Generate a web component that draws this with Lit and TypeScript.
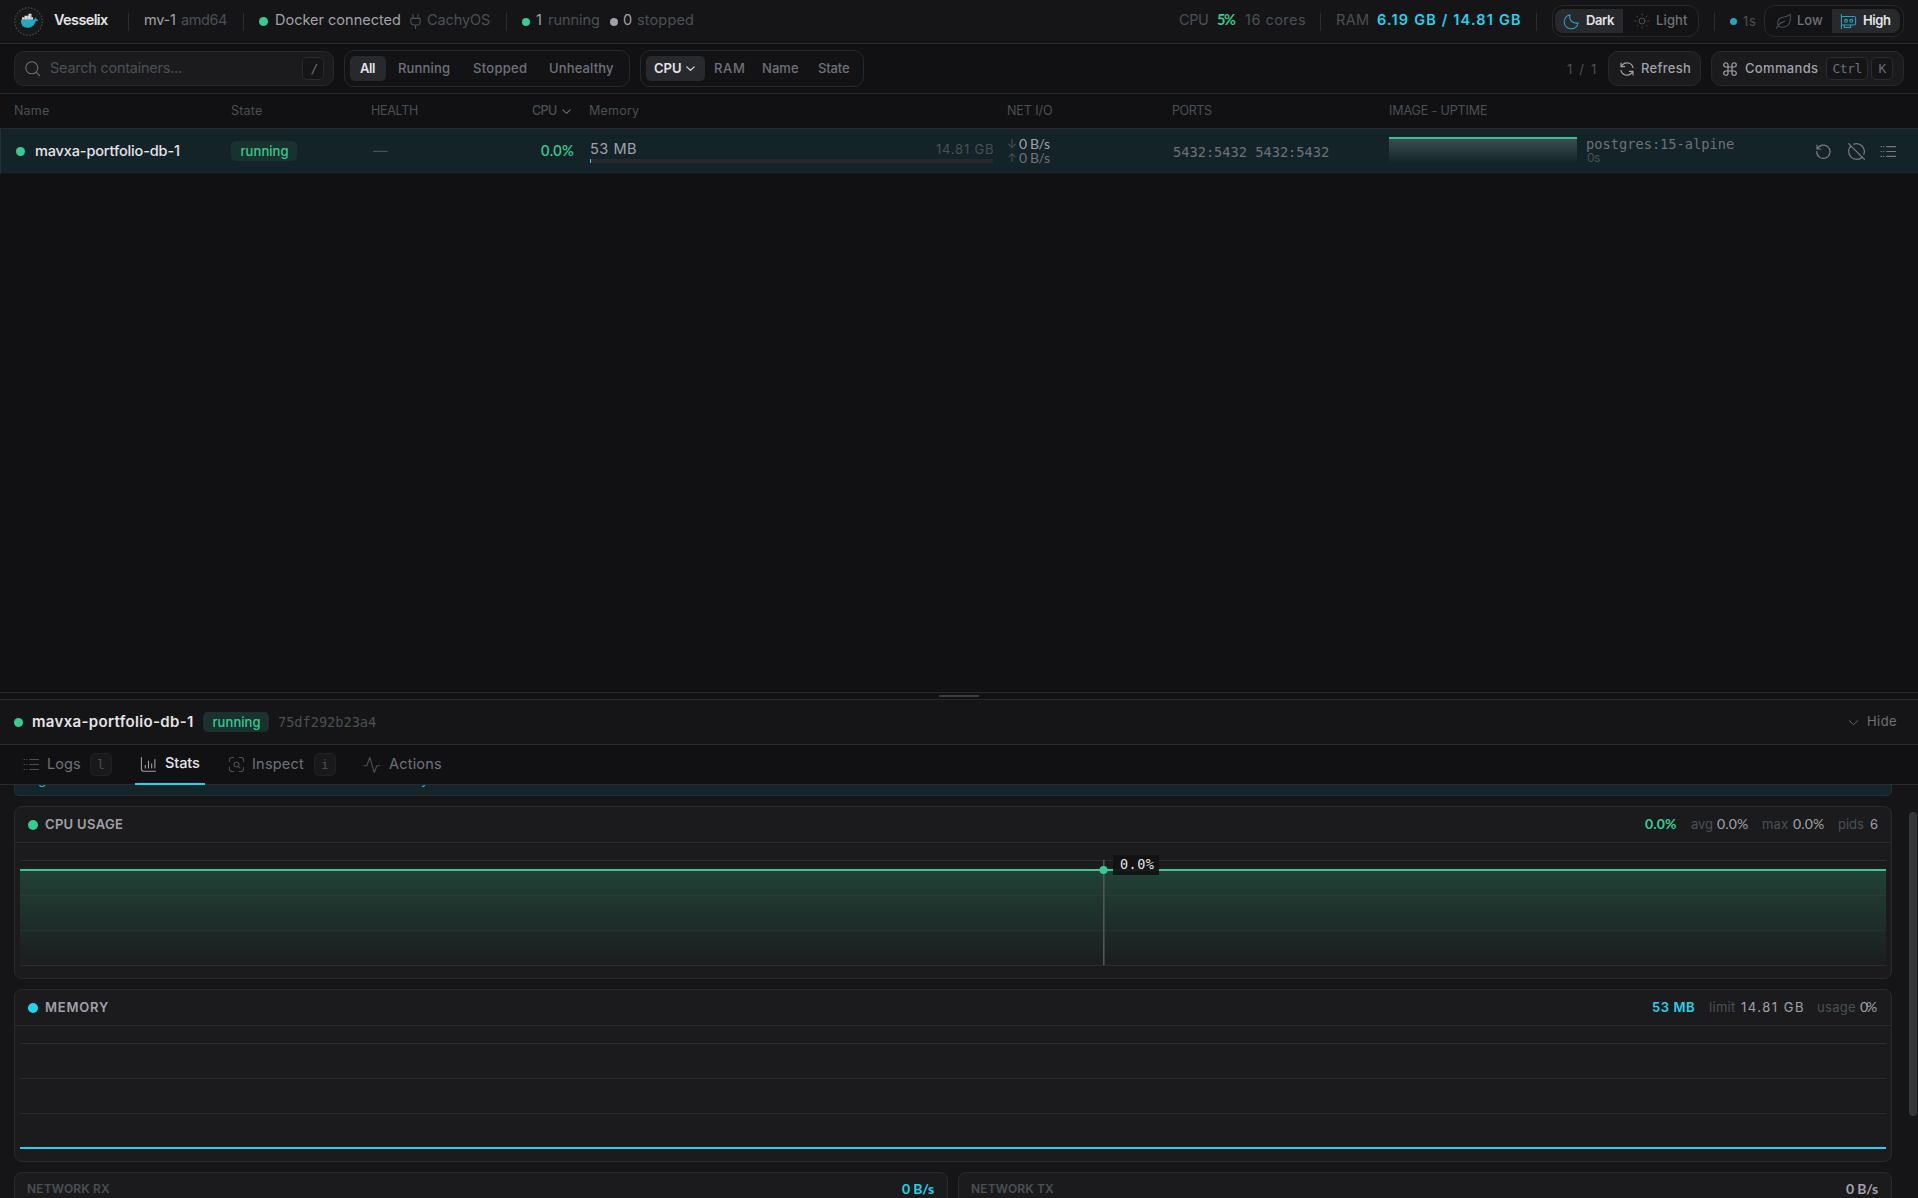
import { LitElement, html, css, svg, unsafeCSS } from "lit";
import { customElement, property } from "lit/decorators.js";

const probe = document.createElement("canvas").getContext("2d")!;

/** A one-line label whose tracking is adjusted so that its ink spans `w` pixels. */
@customElement("fit-text")
class FitText extends LitElement {
  @property({ type: Number }) w = 0;
  @property() t = "";
  static styles = css`
    :host { display: block; flex: none; white-space: pre; }
    span { display: block; }
  `;
  render() { return html`<span>${this.t}</span>`; }
  updated() {
    const span = this.renderRoot.querySelector("span") as HTMLElement;
    const cs = getComputedStyle(this);
    probe.font = `${cs.fontWeight} ${cs.fontSize} ${cs.fontFamily}`;
    const m = probe.measureText(this.t);
    const ink = m.actualBoundingBoxLeft + m.actualBoundingBoxRight;
    const n = this.t.length - 1;
    this.style.width = `${this.w}px`;
    span.style.marginLeft = `${m.actualBoundingBoxLeft}px`;
    if (n > 0) span.style.letterSpacing = `${(this.w - ink) / n}px`;
  }
}

const t = (text: string, w: number, cls = "") => html`<fit-text class=${cls} .t=${text} .w=${w}></fit-text>`;

const icon = (body: unknown, cls = "", size = 17, sw = 1.5) => html`
  <svg class="ic ${cls}" width=${size} height=${size} viewBox="0 0 24 24" fill="none" stroke="currentColor"
    stroke-width=${sw} stroke-linecap="round" stroke-linejoin="round">${body}</svg>`;

const I = {
  plug: svg`<path d="M8 1v6M16 1v6M4.500 7h15v5.500a5 5 0 0 1-5 5h-5a5 5 0 0 1-5-5zM12 17.500V23"/>`,
  moon: svg`<path d="M21.5 14.1A9.4 9.4 0 0 1 9.9 2.5A10 10 0 1 0 21.500 14.100zM9.900 2.500c-1.600 5.500 0 7.500 2.600 9.500s6 2.600 9 2.100"/>`,
  sun: svg`<circle cx="12" cy="12" r="4.5"/><path d="M12 1.500v1.500M12 21v1.500M1.500 12h1.500M21 12h1.500M4.600 4.600l1 1M18.400 18.400l1 1M4.600 19.400l1-1M18.400 5.600l1-1"/>`,
  leaf: svg`<path d="M4.500 18.500C2.500 12 5 7 10.500 6c4-.8 6.500-.5 11-4 1 8-.5 17-9.500 18-3 .3-5.500-.2-7.500-1.500zM2 22c1.500-5 5-8.500 11.500-10.500"/>`,
  gpu: svg`<path d="M2 2v20M2 5h17.500a2.500 2.500 0 0 1 2.500 2.500v7a2.500 2.500 0 0 1-2.500 2.500H2M6 17v3.500h9V17"/><circle cx="8.500" cy="11" r="2"/><circle cx="16" cy="11" r="2"/>`,
  search: svg`<circle cx="11" cy="11" r="8.500"/><path d="M17.500 17.500L22 22"/>`,
  chevron: svg`<path d="M4 8.500l8 7.500 8-7.500"/>`,
  refresh: svg`<path d="M21 10A9.200 9.200 0 0 0 5 6L3 8.500M3 3v5.500h5.500M3 14a9.200 9.200 0 0 0 16 4l2-2.500M21 21v-5.500h-5.500"/>`,
  command: svg`<path d="M9 9V5.800A3.200 3.200 0 1 0 5.800 9H9zm0 0h6m-6 0v6m6-6V5.800A3.200 3.200 0 1 1 18.200 9H15zm0 0v6m0 0H9m6 0v3.200a3.200 3.200 0 1 0 3.200-3.200H15zm-6 0v3.200A3.200 3.200 0 1 1 5.800 15H9z"/>`,
  restart: svg`<path d="M2.800 3v5.500h5.500M3.200 8.500A9.400 9.400 0 1 1 2.400 12"/>`,
  ban: svg`<path d="M2 2l20 20M19.500 19A10 10 0 0 1 5 4.800M8.500 2.700A10 10 0 0 1 21.300 15.500"/>`,
  list: svg`<path d="M9.500 5H22M9.500 12H22M9.500 19H22M1.500 5h.6M5 5h.6M1.500 12h.6M5 12h.6M1.500 19h.6M5 19h.6"/>`,
  chart: svg`<path d="M2 2v16.500a3 3 0 0 0 3 3h17M7.500 17v-4M12 17V7M16.500 17v-6M21 17V5"/>`,
  inspect: svg`<path d="M2 8V6a4 4 0 0 1 4-4h2M16 2h2a4 4 0 0 1 4 4v2M22 16v2a4 4 0 0 1-4 4h-2M8 22H6a4 4 0 0 1-4-4v-2M14.500 14.500L17 17"/><circle cx="12" cy="12" r="3.500"/>`,
  pulse: svg`<path d="M1.500 13H5L9 2l6 20 3.500-9h4"/>`,
};

const margins = unsafeCSS(Array.from({ length: 26 }, (_, i) => `.m${i}{margin-left:${i}px}`).join(""));

@customElement("app-root")
class AppRoot extends LitElement {
  static styles = [css`
    :host { display: block; }
    * { box-sizing: border-box; }
    .app {
      width: 1918px; height: 1198px; overflow: hidden; display: flex; flex-direction: column;
      background: #111113; color: #a1a1aa; font-family: Inter, sans-serif; font-size: 14.5px; line-height: 20px;
    }
    .row { display: flex; align-items: center; }
    .push { margin-left: auto; }
    .ic { display: block; flex: none; }
    .mono { font-family: "DejaVu Sans Mono", monospace; font-weight: 400; }
    .mono.s13 { font-size: 13.7px; }
    .num { font-family: Lato, sans-serif; }
    .num.b5 { font-weight: 600; }
    .dim { color: #495055; }
    .mid { color: #6e717a; }
    .hi { color: #e4e4e7; }
    .green { color: #36cb92; }
    .cyan { color: #22d3ee; }
    .b5 { font-weight: 500; }
    .b6 { font-weight: 600; }
    .num.b6 { font-weight: 700; }
    .s12 { font-size: 12px; }
    .s13 { font-size: 13px; }
    .up { padding-bottom: 3px; }
    .up2 { padding-bottom: 2px; }
    .down { padding-top: 2px; }
    .dot { width: 9px; height: 9px; border-radius: 50%; background: #36cb92; flex: none; }
    .dot.sm { width: 8px; height: 8px; }
    .dot.lg { width: 10px; height: 10px; }
    .dot.xs { width: 7px; height: 7px; background: #22a5c0; }
    .dot.grey { background: #a1a1aa; }
    .dot.cy { background: #22d3ee; }
    .sep { width: 1px; height: 18px; background: #2b2d30; flex: none; }
    .kbd {
      display: flex; align-items: center; justify-content: center; width: 22px; height: 23px; flex: none;
      border: 1px solid #292b2e; border-radius: 5px; background: #151517; color: #6b6e77; font-size: 13px;
    }
    .kbd.wide { width: 42px; }

    .top { height: 44px; flex: none; padding: 0 14px; background: #151517; border-bottom: 1px solid #292a2d; }
    .seg { display: flex; align-items: center; border: 1px solid #26292b; background: #131315; flex: none; }
    .theme { width: 147px; height: 32px; border-radius: 11px; padding: 0 2px; }
    .perf { width: 140px; height: 32px; border-radius: 11px; padding: 0 2px; }
    .theme fit-text, .perf fit-text { padding-bottom: 2px; }
    .theme, .perf { margin-bottom: 1px; }
    .pill { display: flex; align-items: center; height: 24px; background: #28292d; flex: none; }
    .pill.left { width: 68px; border-radius: 8px 0 0 8px; }
    .pill.right { width: 68px; border-radius: 0 8px 8px 0; }
    .teal { color: #22a5c0; }

    .tools { height: 50px; flex: none; padding: 0 14px; border-bottom: 1px solid #292a2d; background: #111113; }
    .field {
      display: flex; align-items: center; height: 35px; flex: none;
      border: 1px solid #26292b; border-radius: 10px; background: #1b1b1d;
    }
    .search { width: 320px; }
    .refresh { width: 93px; }
    .commands { width: 193px; }
    .filters { width: 286px; height: 37px; border-radius: 10px; padding-left: 5px; }
    .sorts { width: 224px; height: 37px; border-radius: 10px; padding-left: 5px; }
    .pill.tab { height: 25px; border-radius: 5px; }
    .w36 { width: 36px; }
    .w59 { width: 59px; }
    .filters fit-text, .sorts fit-text, .field > fit-text { padding-bottom: 1px; }

    .grid {
      display: grid; align-items: center; padding-left: 14px; flex: none;
      grid-template-columns: 217px 140px 161px 58px 417px 165px 217px 1fr auto;
    }
    .head { height: 35px; border-bottom: 1px solid #292a2d; font-size: 12.5px; }
    .entry { height: 45px; background: #142327; border-left: 1px solid #26302f; padding-left: 13px; border-bottom: 1px solid #151b1d; }
    .badge {
      display: flex; align-items: center; justify-content: center; height: 20px; width: 66px; flex: none;
      border-radius: 5px; background: #19322f; color: #36cb92; font-size: 13px; font-weight: 500;
    }
    .mem { width: 403px; display: flex; flex-direction: column; padding-bottom: 1px; }
    .track { height: 4px; background: #27282c; display: flex; }
    .fill { width: 1px; background: #22d3ee; }
    .net { display: flex; flex-direction: column; line-height: 14px; font-size: 14px; }
    .spark { width: 188px; height: 28px; border-top: 2px solid #2fc48c; flex: none; background: linear-gradient(#3c4c50, #15272a 88%, #142327); }
    .img { line-height: 13px; display: flex; flex-direction: column; }
    .acts { display: flex; align-items: center; color: #777981; padding-right: 21px; }

    .void { flex: 1; }
    .grip { height: 8px; flex: none; border-top: 1px solid #292a2d; border-bottom: 1px solid #292a2d; display: flex; align-items: center; justify-content: center; }
    .handle { width: 40px; height: 2px; background: #3a3c40; }
    .detail { height: 45px; flex: none; padding: 0 14px; background: #151517; border-bottom: 1px solid #292a2d; }
    .title { font-size: 15px; padding-bottom: 1px; }
    .tabs { height: 40px; flex: none; border-bottom: 1px solid #292a2d; padding-left: 22px; align-items: flex-start; }
    .tabs > .row { height: 39px; }
    .tabs > .row > fit-text { padding-bottom: 2px; }
    .tabs .kbd { color: #4b4f54; background: #19191b; border-color: #202124; }
    .tabs > .on { width: 70px; height: 40px; border-bottom: 2px solid #22d3ee; z-index: 1; }

    .body { height: 413px; flex: none; overflow: hidden; background: #151517; display: flex; justify-content: space-between; }
    .stack { width: 1878px; margin: -26px 0 0 14px; display: flex; flex-direction: column; gap: 10px; }
    .notice {
      height: 37px; flex: none; border: 1px solid #26302f; border-radius: 5px; background: #14262a;
      display: flex; align-items: flex-start; padding: 9px 22px 0 23px; color: #22b8d0; font-size: 14px;
    }
    .notice .far { margin-left: 376px; }
    .card { border: 1px solid #292a2d; border-radius: 8px; background: #1b1b1d; flex: none; }
    .card.plot { height: 173px; }
    .cap { height: 36px; padding: 0 14px 0 13px; font-size: 13px; border-bottom: 1px solid #292a2d; }
    .cap fit-text { padding-bottom: 2px; }
    .cap .num { font-size: 14px; }
    .chart { display: block; margin-left: 5px; }
    .tip { font: 500 13.500px "DejaVu Sans Mono", monospace; }
    .pair { display: grid; grid-template-columns: 934px 934px; gap: 10px; }
    .pair .card { height: 120px; }
    .pair .cap { border: 0; height: 34px; padding: 0 13px 0 12px; }
    .bar { width: 8px; height: 304px; margin: 27px 1px 0 0; border-radius: 4px; background: #34373a; }
    .logo { display: block; flex: none; }
  `, css`${margins}`];

  gridlines(ys: number[]) {
    return ys.map((y) => svg`<path d="M0 ${y}.5H1866" stroke="#2a2b2e" />`);
  }

  render() {
    return html`<div class="app">
      <div class="row top">
        <svg class="logo" width="30" height="30" viewBox="0 0 30 30">
          <circle cx="14.500" cy="14.500" r="13.800" fill="#18191b" stroke="#4a4d51" stroke-width="1.100" stroke-dasharray="1.600 1.600"/>
          <path d="M8 10.300h2.500v-1.600h4v-2h3v3.600h1.500v2.500H8z" fill="#d8dcdf"/>
          <path d="M10.500 9.500v3.500M13.500 8.500v4M16.500 8v4.500" stroke="#8b9397" stroke-width=".5"/>
          <path d="M7 12.800h12.500c1 0 1.300-.8 1.300-2.500 1 .6 1.400 1.300 1.500 2 .8-.2 1.400 0 2 .4-.5 1.200-1.500 1.600-2.700 1.600C20.500 18.500 17.500 20.800 13.300 20.800c-4.300 0-6.600-2.800-6.300-8z" fill="#20a9c4"/>
        </svg>
        ${t("Vesselix", 54, "m10 b6 hi up")}
        <div class="sep m20"></div>
        ${t("mv-1", 30, "m16 up")}${t("amd64", 46, "m6 dim up")}
        <div class="sep m16"></div>
        <div class="dot m15"></div>${t("Docker connected", 124, "m8 up")}
        ${icon(I.plug, "m8 dim", 15, 1.8)}${t("CachyOS", 63, "m4 dim up")}
        <div class="sep m16"></div>
        <div class="dot sm m15"></div>${t("1", 6, "m6 up")}${t("running", 50, "m7 dim up")}
        <div class="dot sm grey m11"></div>${t("0", 8, "m5 up")}${t("stopped", 56, "m6 dim up")}
        <div class="push row">
          ${t("CPU", 29, "dim up")}${t("5%", 19, "m9 b6 num green up")}${t("16 cores", 60, "m9 dim up")}
          <div class="sep m15"></div>
          ${t("RAM", 31, "m16 dim up")}${t("6.19 GB / 14.81 GB", 143, "m9 b6 cyan up")}
          <div class="sep m16"></div>
          <div class="seg theme m15">
            <div class="pill left">${icon(I.moon, "m8 teal", 17)}${t("Dark", 29, "m6 b6 hi s13")}</div>
            ${icon(I.sun, "m11 dim", 16)}${t("Light", 31, "m7 b5 mid s13")}
          </div>
          <div class="sep m15"></div>
          <div class="dot xs m15"></div>${t("1s", 13, "m6 dim s13 up2")}
          <div class="seg perf m8">
            ${icon(I.leaf, "m8 dim", 17)}${t("Low", 25, "m6 b5 mid s13")}
            <div class="pill right m9">${icon(I.gpu, "m8 teal", 17)}${t("High", 28, "m6 b6 hi s13")}</div>
          </div>
        </div>
      </div>

      <div class="row tools">
        <div class="field search">
          ${icon(I.search, "m9 mid", 17)}${t("Search containers...", 132, "m9 dim")}
          <div class="push kbd">${t("/", 5, "mono")}</div><div class="m9"></div>
        </div>
        <div class="seg filters m10">
          <div class="pill tab w36">${t("All", 15, "m10 b6 hi s13")}</div>
          ${t("Running", 51, "m13 b5 mid s13")}${t("Stopped", 54, "m23 b5 mid s13")}${t("Unhealthy", 64, "m23 b5 mid s13")}
        </div>
        <div class="seg sorts m10">
          <div class="pill tab w59">${t("CPU", 27, "m8 b6 hi s13")}${icon(I.chevron, "m4 hi", 11, 2.6)}</div>
          ${t("RAM", 29, "m10 b5 mid s13")}${t("Name", 36, "m19 b5 mid s13")}${t("State", 32, "m19 b5 mid s13")}
        </div>
        <div class="push row">
          ${t("1 / 1", 29, "dim s13")}
          <div class="field refresh m12">${icon(I.refresh, "m10 ", 16, 1.8)}${t("Refresh", 48, "m7 b5 s13")}</div>
          <div class="field commands m10">${icon(I.command, "m10 ", 16, 1.8)}${t("Commands", 73, "m7 b5 s13")}
            <div class="kbd wide m8">${t("Ctrl", 29, "mono")}</div><div class="kbd m3">${t("K", 7, "mono")}</div>
          </div>
        </div>
      </div>

      <div class="grid head dim">
        ${t("Name", 34, "m1")}${t("State", 31)}${t("HEALTH", 46, "m1")}
        <div class="row">${t("CPU", 25, "b5 lab")}${icon(I.chevron, "m4 mid", 11, 2.2)}</div>
        ${t("Memory", 49)}${t("NET I/O", 44, "m1")}${t("PORTS", 39, "m1")}${t("IMAGE - UPTIME", 97, "m1")}<div></div>
      </div>

      <div class="grid entry">
        <div class="row"><div class="dot m2"></div>${t("mavxa-portfolio-db-1", 143, "m11 b5 hi")}</div>
        <div class="badge">${t("running", 48, "m1")}</div>
        ${t("—", 12, "dim m2")}
        ${t("0.0%", 33, "b5 num green m9")}
        <div class="mem">
          <div class="row">${t("53 MB", 45, "m1")}${t("14.81 GB", 57, "push dim s13")}</div>
          <div class="track"><div class="fill"></div></div>
        </div>
        <div class="net">
          <div class="row">${t("↓", 5, "m1 dim s12")}${t("0 B/s", 31, "num m6")}</div>
          <div class="row">${t("↑", 5, "m1 dim s12")}${t("0 B/s", 31, "num m6 mid")}</div>
        </div>
        ${t("5432:5432 5432:5432", 156, "mono mid m1 s13 down")}
        <div class="row">
          <div class="spark"></div>
          <div class="img m10">${t("postgres:15-alpine", 147, "mono mid s13")}${t("0s", 13, "dim s12")}</div>
        </div>
        <div class="acts">${icon(I.restart, "", 17, 1.7)}${icon(I.ban, "m15", 19, 1.6)}${icon(I.list, "m14", 17, 1.7)}</div>
      </div>

      <div class="void"></div>
      <div class="grip"><div class="handle"></div></div>
      <div class="row detail">
        <div class="dot"></div>${t("mavxa-portfolio-db-1", 160, "m10 b6 hi title")}
        <div class="badge m10">${t("running", 48, "m1")}</div>
        ${t("75df292b23a4", 98, "mono dim m9 s13")}
        <div class="push row">${icon(I.chevron, "mid", 13, 1.6)}${t("Hide", 28, "m8 mid s13 up2")}<div class="m8"></div></div>
      </div>
      <div class="row tabs">
        <div class="row dim">${icon(I.list, "m1", 17)}${t("Logs", 32, "m8 mid")}<div class="kbd m10">${t("l", 6, "mono")}</div></div>
        <div class="row on m23">${icon(I.chart, "m5", 17)}${t("Stats", 35, "m8 b5 hi")}</div>
        <div class="row dim m23">${icon(I.inspect, "", 17)}${t("Inspect", 51, "m8 mid")}<div class="kbd m10">${t("i", 6, "mono")}</div></div>
        <div class="row dim m25">${icon(I.pulse, "m2", 18)}${t("Actions", 52, "m8 mid")}</div>
      </div>

      <div class="body">
        <div class="stack">
          <div class="notice">${t("g", 7)}${t("y", 7, "far")}</div>
          <div class="card plot">
            <div class="row cap"><div class="dot lg"></div>${t("CPU USAGE", 78, "m7 b6")}
              <div class="push row">${t("0.0%", 31, "b6 num green")}${t("avg", 21, "m15 dim")}${t("0.0%", 31, "num m5")}${t("max", 25, "m15 dim")}${t("0.0%", 31, "num m5")}${t("pids", 25, "m15 dim")}${t("6", 7, "m6")}</div>
            </div>
            <svg class="chart" width="1866" height="134" viewBox="0 0 1866 134">
              <defs><linearGradient id="g" x1="0" y1="0" x2="0" y2="1"><stop offset="0" stop-color="#36cb92" stop-opacity=".22"/><stop offset="1" stop-color="#36cb92" stop-opacity=".01"/></linearGradient></defs>
              ${this.gridlines([17, 122])}
              <path d="M0 52.500H1866M0 87.500H1866" stroke="#232427"/>
              <rect x="0" y="27" width="1866" height="95" fill="url(#g)"/>
              <rect x="0" y="26" width="1866" height="2" fill="#36cb92"/>
              <path d="M1083.800 17v105" stroke="#56595e" stroke-width="1.500"/>
              <circle cx="1083.500" cy="27" r="4" fill="#36cb92"/>
              <rect x="1093" y="12" width="46" height="20" fill="#111113" fill-opacity=".93"/>
              <text class="tip" x="1100" y="26" fill="#e4e4e7" textLength="34">0.0%</text>
            </svg>
          </div>
          <div class="card plot">
            <div class="row cap"><div class="dot lg cy"></div>${t("MEMORY", 63, "m7 b6")}
              <div class="push row">${t("53 MB", 42, "b6 cyan")}${t("limit", 25, "m16 dim")}${t("14.81 GB", 62, "m6")}${t("usage", 37, "m15 dim")}${t("0%", 17, "num m5")}</div>
            </div>
            <svg class="chart" width="1866" height="134" viewBox="0 0 1866 134">
              ${this.gridlines([17, 52, 87])}
              <rect x="0" y="121" width="1866" height="2" fill="#22d3ee"/>
            </svg>
          </div>
          <div class="pair">
            <div class="card"><div class="row cap">${t("NETWORK RX", 83, "b6 dim s12")}${t("0 B/s", 32, "push num b6 cyan")}</div></div>
            <div class="card"><div class="row cap">${t("NETWORK TX", 83, "b6 dim s12")}${t("0 B/s", 32, "push num b6")}</div></div>
          </div>
        </div>
        <div class="bar"></div>
      </div>
    </div>`;
  }
}
